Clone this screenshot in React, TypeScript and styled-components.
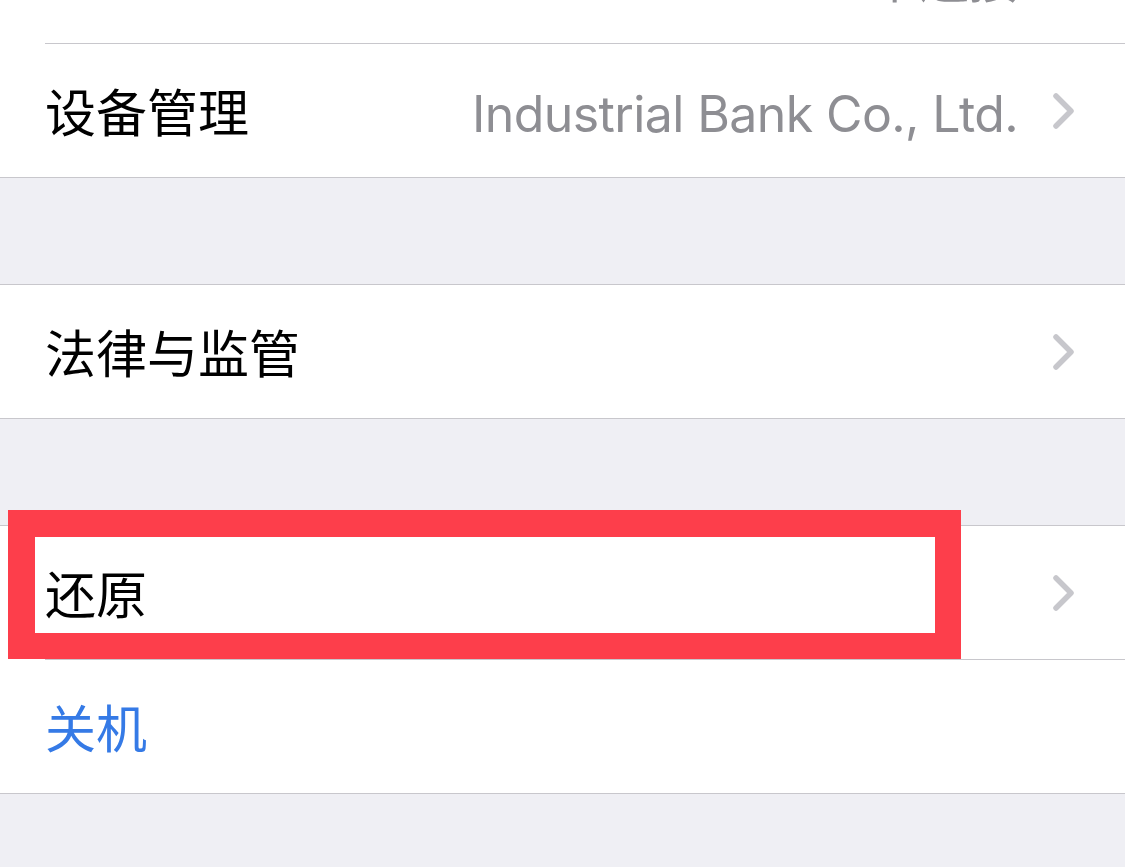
import styled, { createGlobalStyle } from 'styled-components'

const GlobalStyle = createGlobalStyle`
    html, body {
        margin: 0;
        padding: 0;
        background: #efeff4;
    }
    body {
        font-family: Inter, "Noto Sans CJK SC", sans-serif;
        -webkit-font-smoothing: antialiased;
    }
`

const Page = styled.div`
    position: relative;
    width: 1125px;
    height: 867px;
    overflow: hidden;
    background: #efeff4;
`

const Group = styled.div<{ $offset?: number }>`
    background: #fff;
    border-top: 1px solid #c8c7cc;
    border-bottom: 1px solid #c8c7cc;
    margin-top: ${p => p.$offset ?? 106}px;
`

const Row = styled.div`
    height: 133px;
    display: flex;
    align-items: center;
    padding: 6px 50px 0 45px;
    box-sizing: border-box;
`

const Label = styled.span<{ $blue?: boolean }>`
    flex: 1;
    font-family: Inter, "Noto Sans CJK SC", sans-serif;
    font-size: 51px;
    color: ${p => (p.$blue ? '#357ae6' : '#000')};
    line-height: 1;
`

const Value = styled.span`
    font-family: Inter, "Noto Sans CJK SC", sans-serif;
    font-size: 50px;
    letter-spacing: -0.6px;
    color: #8e8e93;
    margin-right: 35px;
    line-height: 1;
`

const Divider = styled.div`
    height: 1px;
    margin-left: 45px;
    background: #c8c7cc;
`

const Highlight = styled.div`
    position: absolute;
    left: 8px;
    top: 510px;
    width: 953px;
    height: 149px;
    box-sizing: border-box;
    border: 27px solid #fd3e4b;
    border-right-width: 26px;
    border-bottom-width: 26px;
`

const ChevronIcon = styled.svg`
    flex: none;
    margin-top: -6px;
`

function Chevron() {
    return (
        <ChevronIcon width="22" height="36" viewBox="0 0 22 36">
            <polyline
                points="3,3 18,18 3,33"
                fill="none"
                stroke="#c7c7cc"
                strokeWidth="5.5"
                strokeLinecap="round"
                strokeLinejoin="round"
            />
        </ChevronIcon>
    )
}

type Item = { label: string; value?: string; blue?: boolean; chevron?: boolean }

function Cell({ item }: { item: Item }) {
    return (
        <Row>
            <Label $blue={item.blue}>{item.label}</Label>
            {item.value && <Value>{item.value}</Value>}
            {item.chevron !== false && <Chevron />}
        </Row>
    )
}

const groups: Item[][] = [
    [
        { label: 'VPN', value: '未连接' },
        { label: '设备管理', value: 'Industrial Bank Co., Ltd.' },
    ],
    [{ label: '法律与监管' }],
    [
        { label: '还原' },
        { label: '关机', blue: true, chevron: false },
    ],
]

export default function App() {
    return (
        <Page>
            <GlobalStyle />
            {groups.map((items, gi) => (
                <Group key={gi} $offset={gi === 0 ? -91 : 106}>
                    {items.map((item, i) => (
                        <div key={item.label}>
                            {i > 0 && <Divider />}
                            <Cell item={item} />
                        </div>
                    ))}
                </Group>
            ))}
            <Highlight />
        </Page>
    )
}
